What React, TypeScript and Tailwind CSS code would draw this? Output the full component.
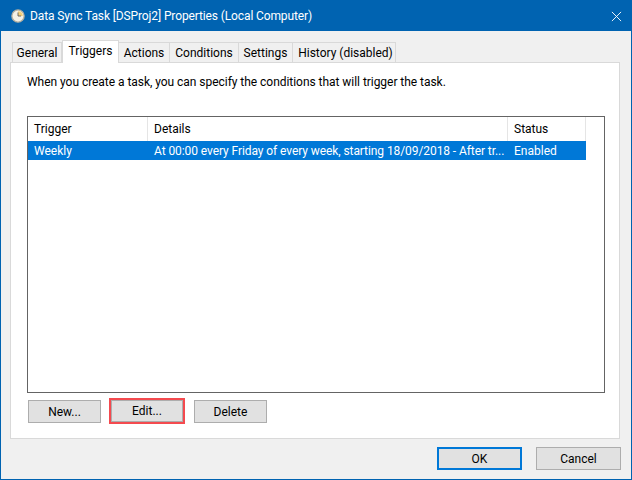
const tabs = [
  { label: "General", w: "w-[50px]" },
  { label: "Triggers", w: "w-[57px]", active: true },
  { label: "Actions", w: "w-[51px]" },
  { label: "Conditions", w: "w-[69px]" },
  { label: "Settings", w: "w-[54px]" },
  { label: "History (disabled)", w: "w-[103px] pl-[3px]" },
];

function ClockIcon() {
  return (
    <svg viewBox="0 0 16 16" className="h-[14px] w-[14px] shrink-0">
      <circle cx="8" cy="8" r="7" fill="#f4f1e6" stroke="#b4b0a2" strokeWidth="1.5" />
      <path d="M8 8 V2.5 A5.5 5.5 0 0 1 13.5 8 Z" fill="#f3cf7a" />
      <path d="M8 4 V8 H11.5" fill="none" stroke="#5a5a5a" strokeWidth="1" />
    </svg>
  );
}

function Btn({ label, className = "border border-[#adadad]" }: { label: string; className?: string }) {
  return (
    <div className={"flex items-center justify-center bg-[#e1e1e1] " + className}>
      {label}
    </div>
  );
}

export default function App() {
  return (
    <div className="flex h-[480px] w-[632px] flex-col overflow-hidden border border-[#0063b1] bg-[#f0f0f0] font-['Roboto',sans-serif] text-[12px] leading-none text-black">
      <div className="flex h-[30px] shrink-0 items-center bg-[#0063b1] pl-[10px] pr-[9px] text-white">
        <ClockIcon />
        <span className="ml-[5px] flex-1 tracking-[-0.12px]">Data Sync Task [DSProj2] Properties (Local Computer)</span>
        <svg viewBox="0 0 12 12" className="h-[11px] w-[11px]">
          <path d="M1 1 L11 11 M11 1 L1 11" stroke="#fff" strokeWidth="1" fill="none" />
        </svg>
      </div>

      <div className="flex flex-1 flex-col pl-[9px] pr-[10px] pt-[10px]">
        <div className="relative z-10 -mb-px flex h-[22px] items-end pl-[2px]">
          {tabs.map((t) =>
            t.active ? (
              <div key={t.label} className={"flex h-[23px] items-center justify-center border border-b-0 border-[#d9d9d9] bg-white pb-[2px] " + t.w}>
                {t.label}
              </div>
            ) : (
              <div key={t.label} className={"flex h-[21px] items-center justify-center border border-l-0 border-[#d9d9d9] bg-[#f0f0f0] pt-[1px] first:border-l " + t.w}>
                {t.label}
              </div>
            )
          )}
        </div>

        <div className="flex h-[377px] w-[610px] flex-col border border-[#d9d9d9] bg-white pb-[14px] pl-[16px] pr-[14px] pt-[12px]">
          <div className="h-[41px] pt-[1px] tracking-[-0.04px]">When you create a task, you can specify the conditions that will trigger the task.</div>

          <div className="min-h-0 flex-1 border border-[#646464] bg-white">
            <div className="flex h-[24px] w-[558px] items-center">
              <div className="flex h-full w-[120px] items-center border-r border-[#e5e5e5] pl-[6px]">Trigger</div>
              <div className="flex h-full w-[360px] items-center border-r border-[#e5e5e5] pl-[6px]">Details</div>
              <div className="flex h-full flex-1 items-center border-r border-[#e5e5e5] pl-[6px]">Status</div>
            </div>
            <div className="flex h-[19px] w-[558px] items-center bg-[#0078d7] text-white">
              <div className="w-[120px] pl-[6px]">Weekly</div>
              <div className="w-[360px] whitespace-nowrap pl-[6px] tracking-[-0.08px]">At 00:00 every Friday of every week, starting 18/09/2018 - After tr...</div>
              <div className="flex-1 pl-[6px]">Enabled</div>
            </div>
          </div>

          <div className="mt-[5px] flex h-[26px] items-start">
            <Btn label="New..." className="mt-[2px] ml-[1px] h-[23px] w-[73px] border border-[#adadad]" />
            <Btn label="Edit..." className="ml-[8px] h-[26px] w-[76px] border-2 border-[#f44a4f] shadow-[inset_0_0_0_1px_#adadad]" />
            <Btn label="Delete" className="mt-[2px] ml-[9px] h-[23px] w-[73px] border border-[#adadad]" />
          </div>
        </div>

        <div className="mt-[8px] flex justify-end">
          <Btn label="OK" className="h-[23px] w-[85px] border-2 border-[#0078d7]" />
          <Btn label="Cancel" className="ml-[14px] h-[23px] w-[85px] border border-[#adadad]" />
        </div>
      </div>
    </div>
  );
}
